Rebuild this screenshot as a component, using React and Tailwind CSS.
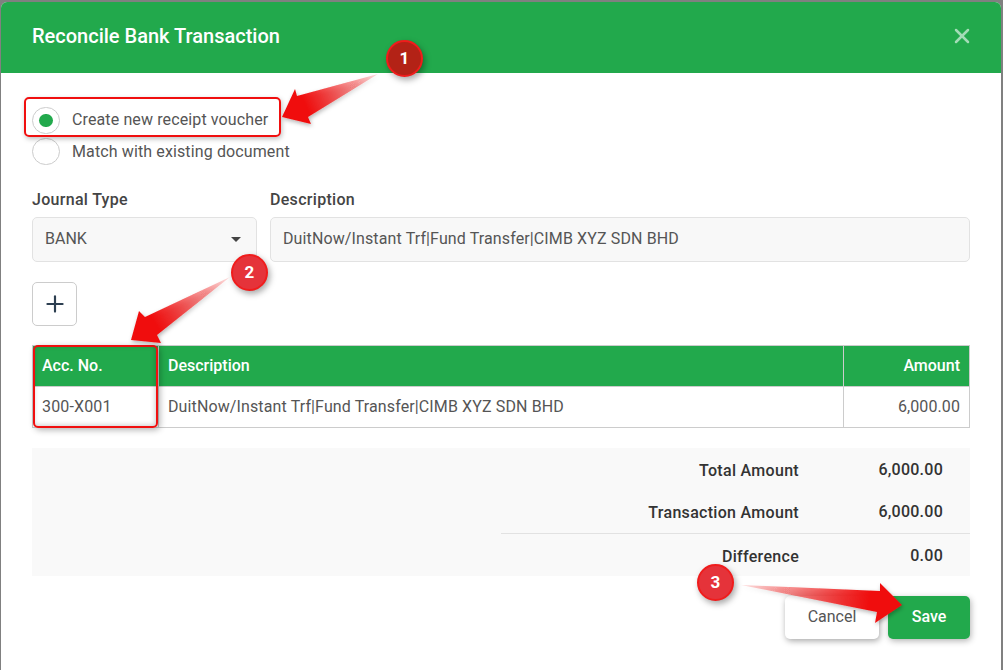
import { X, Plus } from 'lucide-react';

const font = { fontFamily: 'Roboto, "Liberation Sans", sans-serif' };

// numbered circle sitting over the form
const Badge = ({ n, className }) => (
    <div className={`absolute w-[37px] h-[37px] rounded-full border-2 border-[#f01c1c] flex items-center justify-center text-white text-[17px] font-bold shadow-[2px_3px_6px_rgba(0,0,0,0.35)] ${className}`}>
        {n}
    </div>
);

const SummaryRow = ({ label, value, className = '' }) => (
    <div className={`flex justify-end h-[24px] leading-[24px] ${className}`}>
        <span className="text-[16px] font-medium text-[#333] tracking-[0.3px]">{label}</span>
        <span className="w-[144px] text-right text-[16px] font-medium text-[#333] tracking-[0.25px] -translate-y-[1px]">{value}</span>
    </div>
);

export default function App() {
    return (
        <div style={font} className="relative w-[1003px] h-[670px] overflow-hidden bg-[#808080] pt-[2px] pl-[1px] pr-[2px]">
            <div className="w-[1000px] h-[668px] bg-white rounded-t-[6px] overflow-hidden flex flex-col">
                {/* Header */}
                <div className="h-[71px] shrink-0 bg-[#22a94c] flex items-center justify-between pl-[31px] pr-[27px]">
                    <h3 className="text-[20px] font-medium text-white -mt-[4px]">Reconcile Bank Transaction</h3>
                    <X className="w-[24px] h-[24px] text-[#a3dcb6] -mt-[4px]" strokeWidth={2.5} />
                </div>

                <div className="flex flex-col pl-[31px] pr-[31px] pt-[34px]">
                    {/* Radios */}
                    <div className="flex flex-col gap-[4px]">
                        <label className="flex items-center gap-[12px] h-[27px]">
                            <span className="w-[28px] h-[27px] rounded-full border border-[#ccc] flex items-center justify-center">
                                <span className="w-[14px] h-[13px] rounded-full bg-[#22a94c]" />
                            </span>
                            <span className="text-[16px] text-[#555] tracking-[0.12px] -translate-y-[1px]">Create new receipt voucher</span>
                        </label>
                        <label className="flex items-center gap-[12px] h-[27px]">
                            <span className="w-[28px] h-[27px] rounded-full border border-[#ccc]" />
                            <span className="text-[16px] text-[#555] tracking-[0.12px]">Match with existing document</span>
                        </label>
                    </div>

                    {/* Journal fields */}
                    <div className="flex gap-[13px] mt-[25px]">
                        <div className="w-[225px]">
                            <div className="text-[16px] font-medium text-[#444] tracking-[0.3px] h-[20px] leading-[20px]">Journal Type</div>
                            <div className="mt-[7px] h-[45px] rounded-[5px] border border-[#e2e2e2] bg-[#f8f8f8] flex items-center justify-between pl-[12px] pr-[15px] text-[16px] text-[#555]">
                                <span className="-translate-y-[1px]">BANK</span>
                                <span className="w-0 h-0 border-x-[5px] border-x-transparent border-t-[5px] border-t-[#444]" />
                            </div>
                        </div>
                        <div className="flex-1">
                            <div className="text-[16px] font-medium text-[#444] tracking-[0.3px] h-[20px] leading-[20px]">Description</div>
                            <div className="mt-[7px] h-[45px] rounded-[5px] border border-[#e2e2e2] bg-[#f8f8f8] flex items-center pl-[12px] text-[16px] text-[#555] tracking-[0.12px]">
                                <span className="-translate-y-[1px]">DuitNow/Instant Trf|Fund Transfer|CIMB XYZ SDN BHD</span>
                            </div>
                        </div>
                    </div>

                    <button className="mt-[20px] w-[45px] h-[44px] rounded-[5px] border border-[#ccc] bg-white flex items-center justify-center">
                        <Plus className="w-[26px] h-[26px] text-[#2c3e50]" strokeWidth={2} />
                    </button>

                    {/* Lines table */}
                    <table className="mt-[19px] w-[938px] table-fixed border-collapse text-[16px]">
                        <colgroup>
                            <col className="w-[126px]" />
                            <col />
                            <col className="w-[126px]" />
                        </colgroup>
                        <thead>
                            <tr className="h-[41px] bg-[#22a94c] text-white font-medium">
                                <th className="border border-[#ccc] font-medium text-left px-[9px] whitespace-nowrap">Acc. No.</th>
                                <th className="border border-[#ccc] font-medium text-left px-[9px]">Description</th>
                                <th className="border border-[#ccc] font-medium text-right px-[9px]">Amount</th>
                            </tr>
                        </thead>
                        <tbody>
                            <tr className="h-[41px] text-[#555]">
                                <td className="border border-[#ccc] px-[9px] tracking-[0.15px]">300-X001</td>
                                <td className="border border-[#ccc] px-[9px] tracking-[0.12px]">DuitNow/Instant Trf|Fund Transfer|CIMB XYZ SDN BHD</td>
                                <td className="border border-[#ccc] px-[9px] text-right tracking-[0.1px]">6,000.00</td>
                            </tr>
                        </tbody>
                    </table>

                    {/* Totals */}
                    <div className="mt-[20px] h-[128px] bg-[#f9f9f9] pr-[27px] pt-[11px]">
                        <SummaryRow label="Total Amount" value="6,000.00" />
                        <SummaryRow label="Transaction Amount" value="6,000.00" className="mt-[18px]" />
                        <div className="mt-[8px] ml-[469px] -mr-[27px] border-t border-[#e2e2e2]" />
                        <SummaryRow label="Difference" value="0.00" className="mt-[11px]" />
                    </div>

                    {/* Footer */}
                    <div className="mt-[20px] flex justify-end gap-[9px]">
                        <button className="w-[94px] h-[43px] rounded-[5px] bg-white text-[16px] text-[#555] shadow-[1px_2px_6px_rgba(0,0,0,0.35)]"><span className="inline-block -translate-y-[1px]">Cancel</span></button>
                        <button className="w-[82px] h-[43px] rounded-[5px] bg-[#22a94c] text-[16px] font-medium text-white shadow-[1px_2px_6px_rgba(0,0,0,0.3)]"><span className="inline-block -translate-y-[1px]">Save</span></button>
                    </div>
                </div>
            </div>

            {/* Callouts on top of the form */}
            <div className="absolute left-[24px] top-[97px] w-[257px] h-[40px] rounded-[5px] border-2 border-[#f00f0f] shadow-[1px_2px_5px_rgba(0,0,0,0.25)]" />
            <div className="absolute left-[33px] top-[345px] w-[125px] h-[83px] rounded-[5px] border-2 border-[#f00f0f] shadow-[2px_2px_6px_rgba(0,0,0,0.3),inset_-1px_-1px_5px_rgba(0,0,0,0.2)]" />

            <svg className="absolute inset-0" width="1003" height="670">
                <defs>
                    <linearGradient id="a1" gradientUnits="userSpaceOnUse" x1="378" y1="74" x2="282" y2="117">
                        <stop offset="0" stopColor="#f00f0f" stopOpacity="0.12" />
                        <stop offset="0.75" stopColor="#f00f0f" />
                    </linearGradient>
                    <linearGradient id="a2" gradientUnits="userSpaceOnUse" x1="230" y1="277" x2="131" y2="340">
                        <stop offset="0" stopColor="#f00f0f" stopOpacity="0.12" />
                        <stop offset="0.75" stopColor="#f00f0f" />
                    </linearGradient>
                    <linearGradient id="a3" gradientUnits="userSpaceOnUse" x1="741" y1="585" x2="902" y2="605">
                        <stop offset="0" stopColor="#f00f0f" stopOpacity="0.12" />
                        <stop offset="0.8" stopColor="#f00f0f" />
                    </linearGradient>
                    <filter id="sh" x="-20%" y="-20%" width="140%" height="140%">
                        <feDropShadow dx="1" dy="2" stdDeviation="2" floodColor="#000" floodOpacity="0.3" />
                    </filter>
                </defs>
                <polygon filter="url(#sh)" fill="url(#a1)" points="282,117 295,89 297,96 378,74 308,117 311,124" />
                <polygon filter="url(#sh)" fill="url(#a2)" points="131,340 139,311 145,317 230,277 157,335 161,343" />
                <polygon filter="url(#sh)" fill="url(#a3)" points="741,585 880,591 880,583 902,605 875,623 877,612" />
            </svg>

            <Badge n="1" className="left-[386px] top-[40px] bg-[#b32216]" />
            <Badge n="2" className="left-[231px] top-[254px] bg-[#e5333a]" />
            <Badge n="3" className="left-[697px] top-[564px] bg-[#e5333a]" />
        </div>
    );
}
